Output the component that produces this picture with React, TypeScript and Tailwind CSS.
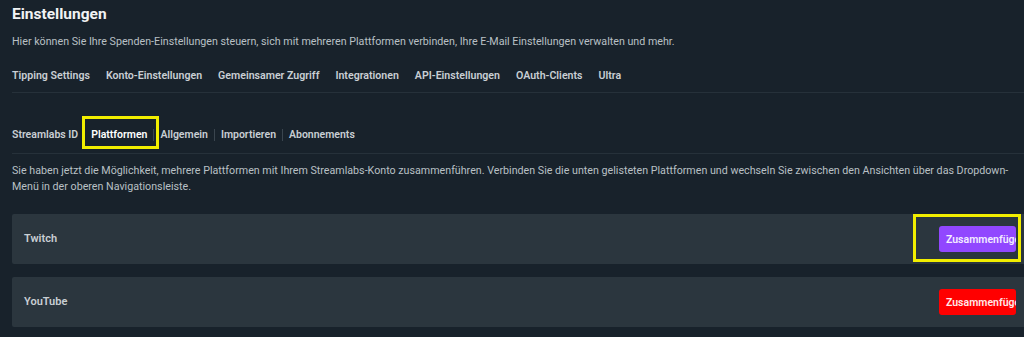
const TABS = [
  'Tipping Settings',
  'Konto-Einstellungen',
  'Gemeinsamer Zugriff',
  'Integrationen',
  'API-Einstellungen',
  'OAuth-Clients',
  'Ultra',
];

const SUB_TABS = ['Streamlabs ID', 'Plattformen', 'Allgemein', 'Importieren', 'Abonnements'];

function PlatformRow({
  name,
  buttonClass,
  highlight,
}: {
  name: string;
  buttonClass: string;
  highlight?: boolean;
}) {
  return (
    <div className="flex h-[50px] items-center rounded-l-[2px] bg-[#2b363e] pl-3">
      <span className="text-[11px] font-semibold text-[#c9cfd4]">{name}</span>
      <div className="relative ml-auto mr-[8px]">
        <button
          className={`h-[26px] w-[77px] overflow-hidden whitespace-nowrap rounded-[3px] pl-[7px] text-left text-[10.5px] font-semibold ${buttonClass}`}
        >
          Zusammenfügen
        </button>
        {highlight && (
          <div className="pointer-events-none absolute -left-[26px] -right-[5px] -top-[12px] -bottom-[10px] border-[3px] border-[#f2ee00]" />
        )}
      </div>
    </div>
  );
}

export default function App() {
  return (
    <div className="min-h-screen bg-[#18222b] pl-3 font-['Roboto',sans-serif]">
      <h1 className="pt-[4px] text-[15.5px] font-bold leading-5 text-[#f1f3f4]">Einstellungen</h1>
      <p className="mt-[10px] text-[10.7px] leading-4 text-[#b9c0c5]">
        Hier können Sie Ihre Spenden-Einstellungen steuern, sich mit mehreren Plattformen verbinden, Ihre E-Mail
        Einstellungen verwalten und mehr.
      </p>

      {/* Haupt-Tabs */}
      <nav className="mt-[18px] flex gap-[16px] border-b border-[#26313a] pb-[8px]">
        {TABS.map((tab) => (
          <span key={tab} className="text-[10.6px] font-semibold leading-4 text-[#c9cfd4]">
            {tab}
          </span>
        ))}
      </nav>

      {/* Unter-Tabs */}
      <nav className="mt-[34px] flex items-center border-b border-[#26313a] pb-[10px]">
        {SUB_TABS.map((tab, i) => (
          <div key={tab} className="flex items-center">
            {i > 0 && <span className="mx-[6px] h-[12px] w-px bg-[#3a454e]" />}
            {tab === 'Plattformen' ? (
              <span className="relative text-[10.5px] font-semibold leading-4 text-white">
                {tab}
                <span className="pointer-events-none absolute -left-[9px] -right-[12px] -top-[11px] -bottom-[6px] border-[3px] border-[#f2ee00]" />
              </span>
            ) : (
              <span className="text-[10.5px] font-semibold leading-4 text-[#c9cfd4]">{tab}</span>
            )}
          </div>
        ))}
      </nav>

      <p className="mt-[9px] pr-[10px] text-[10.7px] leading-4 text-[#b9c0c5]">
        Sie haben jetzt die Möglichkeit, mehrere Plattformen mit Ihrem Streamlabs-Konto zusammenführen. Verbinden Sie
        die unten gelisteten Plattformen und wechseln Sie zwischen den Ansichten über das Dropdown-Menü in der oberen
        Navigationsleiste.
      </p>

      <div className="mt-[19px] flex flex-col gap-[13px] pb-3">
        <PlatformRow name="Twitch" buttonClass="bg-[#9147ff] text-[#f3ecff]" highlight />
        <PlatformRow name="YouTube" buttonClass="bg-[#ff0000] text-[#ffe9e9]" />
      </div>
    </div>
  );
}
